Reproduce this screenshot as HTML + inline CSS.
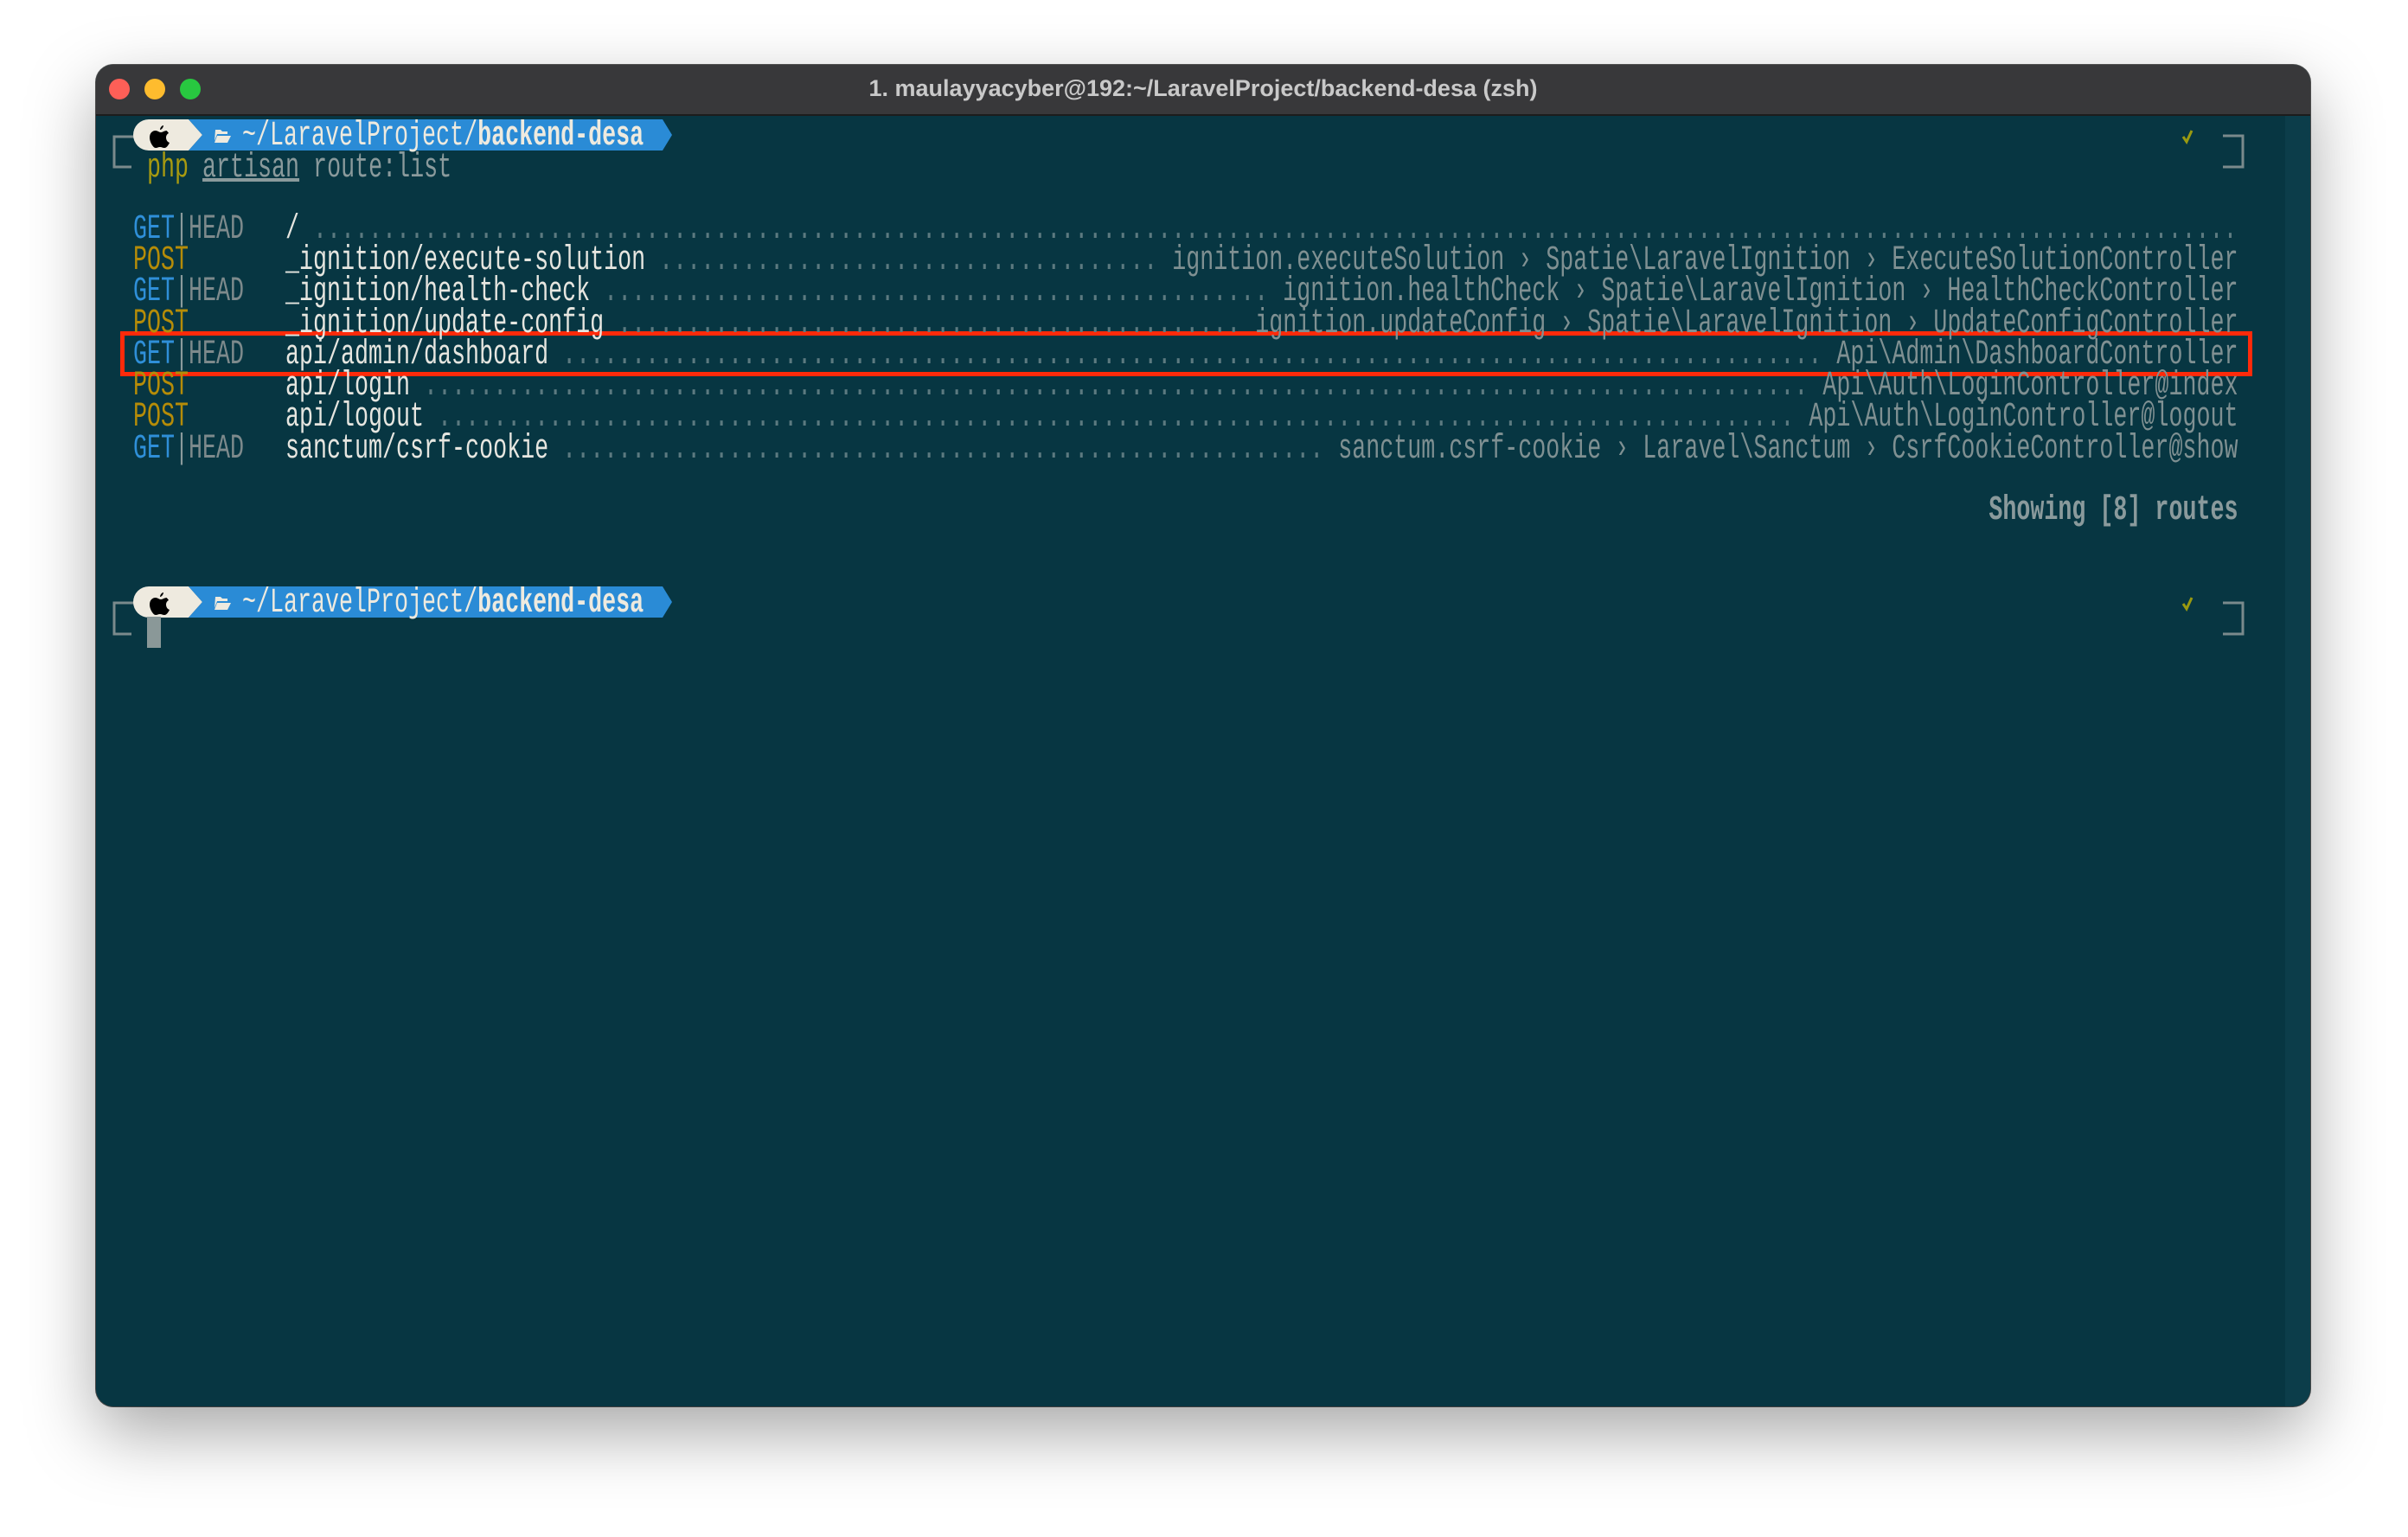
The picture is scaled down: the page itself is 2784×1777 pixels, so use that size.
<!DOCTYPE html>
<html><head><meta charset="utf-8"><style>
html,body{margin:0;padding:0;width:2784px;height:1774px;background:#fff;overflow:hidden}
.win{position:absolute;left:111px;top:75px;width:2560px;height:1551px;border-radius:20px;background:#073642;overflow:hidden;box-shadow:0 30px 80px rgba(0,0,0,.35),0 0 0 1px #555}
.tb{position:absolute;left:0;top:0;right:0;height:57px;background:#38383a;border-bottom:2px solid #1c1c1c}
.dot{position:absolute;top:16px;width:24px;height:24px;border-radius:50%}
.title{position:absolute;left:0;right:0;top:12px;text-align:center;font:bold 27px "Liberation Sans",sans-serif;color:#c9c9c9}
.sb{position:absolute;right:0;top:59px;bottom:0;width:29px;background:#0c3d4a}
.t{position:absolute;left:0;top:3px;width:4176px;height:1774px;transform:scaleX(.6667);transform-origin:0 0;font:40px/36px "Liberation Mono",monospace;color:#8a9a9c;white-space:pre}
.row{position:absolute;left:231px;width:3650px;height:36px;display:flex}
.m{width:264px;flex:none}
.g{color:#2f8fd8}.h{color:#7d8a8c}.p{color:#b58c08}
.pa{color:#e6e6e0;flex:none}
.d{flex:1;overflow:hidden;color:#5c7a80;margin:0 24px}
.r{flex:none;color:#7f9092}
.box{position:absolute;left:139px;top:383px;width:2455px;height:42px;border:5px solid #ff2a0a}
</style></head><body>
<div class="win">
<div class="tb">
<div class="dot" style="left:15px;background:#fe5f57"></div>
<div class="dot" style="left:56px;background:#febc2e"></div>
<div class="dot" style="left:97px;background:#28c840"></div>
<div class="title">1. maulayyacyber@192:~/LaravelProject/backend-desa (zsh)</div>
</div>
<div class="sb"></div>
</div>

<svg style="position:absolute;left:0;top:0" width="2784" height="1774">
<g fill="none" stroke="#7a8a8c" stroke-width="3">
<path d="M155 158 H132 V193 H152"/>
<path d="M155 697 H132 V733 H152"/>
<path d="M2570 157 H2593 V193 H2570"/>
<path d="M2570 697 H2593 V733 H2570"/>
</g>
<g>
<path d="M172 138 H218 L234 156 L218 174 H172 A18 18 0 0 1 172 138Z" fill="#eeeadf"/>
<path d="M218 138 H766 L777 156 L766 174 H218 L234 156Z" fill="#2a8bd6"/>
<path d="M172 678 H218 L234 696 L218 714 H172 A18 18 0 0 1 172 678Z" fill="#eeeadf"/>
<path d="M218 678 H766 L777 696 L766 714 H218 L234 696Z" fill="#2a8bd6"/>
</g>
<g fill="#000">
<path d="M193 151 c-3 0-5 2-7 2 c-2 0-4-2-6-2 c-4 0-7 3-7 8 c0 5 4 12 7 12 c2 0 3-1 5-1 c2 0 3 1 5 1 c3 0 5-4 6-6 c-3-1-4-4-4-6 c0-2 1-4 3-5 c-1-2-3-3-2-3z M189 145 c0 2-2 5-4 5 c0-2 2-5 4-5z"/>
<path d="M193 691 c-3 0-5 2-7 2 c-2 0-4-2-6-2 c-4 0-7 3-7 8 c0 5 4 12 7 12 c2 0 3-1 5-1 c2 0 3 1 5 1 c3 0 5-4 6-6 c-3-1-4-4-4-6 c0-2 1-4 3-5 c-1-2-3-3-2-3z M189 685 c0 2-2 5-4 5 c0-2 2-5 4-5z"/>
</g>
<g fill="#eeeadf">
<path d="M249 150 h6 l2 2 h6 v3 h-12 l-3 8z M251 157 h16 l-4 8 h-15z"/>
<path d="M249 690 h6 l2 2 h6 v3 h-12 l-3 8z M251 697 h16 l-4 8 h-15z"/>
</g>
<path d="M2524 158 l4 6 l6 -13" stroke="#9a9a10" stroke-width="3" fill="none"/>
<path d="M2524 698 l4 6 l6 -13" stroke="#9a9a10" stroke-width="3" fill="none"/>
<rect x="170" y="713" width="16" height="36" fill="#8a9898"/>
</svg>

<div class="box"></div>

<div class="t">
<div style="position:absolute;left:420px;top:137px;color:#eeeadf">~/LaravelProject/<b>backend-desa</b></div>
<div style="position:absolute;left:420px;top:677px;color:#eeeadf">~/LaravelProject/<b>backend-desa</b></div>
<div style="position:absolute;left:255px;top:174px"><span style="color:#a89a10">php</span> <span style="text-decoration:underline;color:#8a9a9c">artisan</span> route:list</div>

<div class="row" style="top:245px"><span class="m"><span class="g">GET</span>|<span class="h">HEAD</span></span><span class="pa">/</span><span class="d" style="margin-right:0">........................................................................................................................................................................................................................</span></div>
<div class="row" style="top:281px"><span class="m p">POST</span><span class="pa">_ignition/execute-solution</span><span class="d">........................................................................................................................................................................................................................</span><span class="r">ignition.executeSolution › Spatie\LaravelIgnition › ExecuteSolutionController</span></div>
<div class="row" style="top:317px"><span class="m"><span class="g">GET</span>|<span class="h">HEAD</span></span><span class="pa">_ignition/health-check</span><span class="d">........................................................................................................................................................................................................................</span><span class="r">ignition.healthCheck › Spatie\LaravelIgnition › HealthCheckController</span></div>
<div class="row" style="top:354px"><span class="m p">POST</span><span class="pa">_ignition/update-config</span><span class="d">........................................................................................................................................................................................................................</span><span class="r">ignition.updateConfig › Spatie\LaravelIgnition › UpdateConfigController</span></div>
<div class="row" style="top:390px"><span class="m"><span class="g">GET</span>|<span class="h">HEAD</span></span><span class="pa">api/admin/dashboard</span><span class="d">........................................................................................................................................................................................................................</span><span class="r">Api\Admin\DashboardController</span></div>
<div class="row" style="top:426px"><span class="m p">POST</span><span class="pa">api/login</span><span class="d">........................................................................................................................................................................................................................</span><span class="r">Api\Auth\LoginController@index</span></div>
<div class="row" style="top:462px"><span class="m p">POST</span><span class="pa">api/logout</span><span class="d">........................................................................................................................................................................................................................</span><span class="r">Api\Auth\LoginController@logout</span></div>
<div class="row" style="top:499px"><span class="m"><span class="g">GET</span>|<span class="h">HEAD</span></span><span class="pa">sanctum/csrf-cookie</span><span class="d">........................................................................................................................................................................................................................</span><span class="r">sanctum.csrf-cookie › Laravel\Sanctum › CsrfCookieController@show</span></div>

<div style="position:absolute;right:295px;top:570px;color:#8a9a9c;font-weight:bold">Showing [8] routes</div>
</div>
</body></html>
